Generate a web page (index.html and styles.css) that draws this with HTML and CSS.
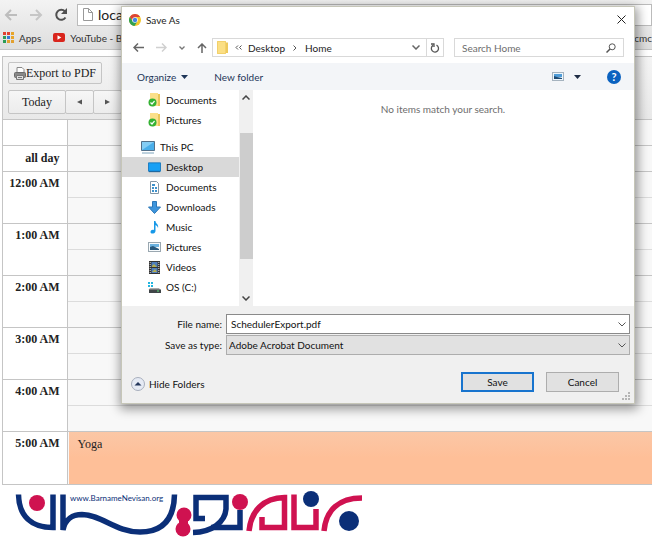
FILE: index.html
```html
<!DOCTYPE html>
<html lang="en">
<head>
<meta charset="utf-8">
<title>Scheduler</title>
<link rel="stylesheet" href="styles.css">
</head>
<body>
<header class="browser">
  <div class="address-row">
    <button class="plain" aria-label="Back"><svg width="14" height="12" viewBox="0 0 14 12" fill="none" stroke="#bdbdbd" stroke-width="2"><path d="M7 1L2 6l5 5M2 6h11"/></svg></button>
    <button class="plain" aria-label="Forward"><svg width="14" height="12" viewBox="0 0 14 12" fill="none" stroke="#c6c6c6" stroke-width="2"><path d="M7 1l5 5-5 5M12 6H1"/></svg></button>
    <button class="plain" aria-label="Reload"><svg width="14" height="14" viewBox="0 0 14 14"><path d="M11.5 9.5A5 5 0 1 1 11 3.500" fill="none" stroke="#505050" stroke-width="2"/><path d="M13 0v6H7z" fill="#505050"/></svg></button>
    <div class="omnibox">
      <svg width="10" height="13" viewBox="0 0 10 13" fill="#fff" stroke="#999"><path d="M.5.5h5l4 4v8h-9zM5.500.5v4h4"/></svg>
      <input class="url" aria-label="Address" value="localhost">
    </div>
  </div>
  <nav class="bookmarks">
    <a href="#apps"><svg width="11" height="11" viewBox="0 0 11 11"><path d="M0 0h3v3H0zM4 0h3v3H4z" fill="#e0402f"/><path d="M8 0h3v3H8zM8 4h3v3H8z" fill="#e8a52a"/><path d="M0 4h3v3H0zM0 8h3v3H0z" fill="#2c9c55"/><path d="M4 4h3v3H4z" fill="#3578d6"/><path d="M4 8h3v3H4zM8 8h3v3H8z" fill="#e2a02f"/></svg>Apps</a>
    <a href="#youtube"><svg width="12" height="9" viewBox="0 0 12 9"><rect width="12" height="9" rx="2" fill="#d9251d"/><path d="M4.500 2.300v4.400L8.300 4.500z" fill="#fff"/></svg>YouTube - B</a>
    <a class="last" href="#cmc">cmc</a>
  </nav>
</header>

<main class="scheduler">
  <div class="tools">
    <button class="tool export"><svg width="12" height="13" viewBox="0 0 12 13"><path d="M3 6V.5h5l2 2V6" fill="#fff" stroke="#888"/><rect x=".5" y="5.500" width="11" height="5" rx="1" fill="#888" stroke="#6a6a6a"/><path d="M2.500 8.500h7v4h-7z" fill="#ddd" stroke="#777"/><path d="M4 10.500h4" stroke="#777"/></svg>Export to PDF</button>
    <div class="dates">
      <button class="tool today">Today</button>
      <button class="tool step" aria-label="Previous day"><svg width="5" height="6" viewBox="0 0 5 6"><path d="M5 .5v5L0 3z" fill="#555"/></svg></button>
      <button class="tool step" aria-label="Next day"><svg width="5" height="6" viewBox="0 0 5 6"><path d="M0 .5v5L5 3z" fill="#555"/></svg></button>
    </div>
  </div>
  <table class="day">
    <tbody>
      <tr class="short"><th></th><td></td></tr>
      <tr class="short"><th scope="row">all day</th><td></td></tr>
      <tr><th scope="row">12:00 AM</th><td><div class="half"></div></td></tr>
      <tr><th scope="row">1:00 AM</th><td><div class="half"></div></td></tr>
      <tr><th scope="row">2:00 AM</th><td><div class="half"></div></td></tr>
      <tr><th scope="row">3:00 AM</th><td><div class="half"></div></td></tr>
      <tr><th scope="row">4:00 AM</th><td><div class="half"></div></td></tr>
      <tr><th scope="row">5:00 AM</th><td><div class="event">Yoga</div></td></tr>
    </tbody>
  </table>
</main>

<footer class="brand">
  <svg width="380" height="47" viewBox="0 489 380 47" fill="none" stroke-width="5.500" role="img" aria-label="Barname Nevisan">
    <g stroke="#0b2f78">
      <path d="M18.500 493.500C19 515 31 526.500 53 526.500V493.500"/>
      <path d="M63 493.500V529C65 518 73 513.500 82 513.500C102 514 116 531 140 531C162 531 174 519 174.500 493.500"/>
      <path d="M205 517.500H196V496.500H226V508C225 521 212 531 193 531.500"/>
      <path d="M211 526.500H240V509"/>
    </g>
    <g stroke="#cf1250">
      <path d="M249 530C251 510 263 497 284.500 496.500V526.500H262V516"/>
      <path d="M294 493.500V526.500H316V508"/>
      <path d="M324 530C326 509 339 497 362 497"/>
    </g>
    <g fill="#cf1250"><circle cx="37" cy="502" r="8"/><circle cx="184" cy="514" r="7.500"/><circle cx="183" cy="528" r="7.500"/><path d="M179 517h9v8h-9z"/><circle cx="240" cy="501" r="8"/></g>
    <g fill="#0b2f78"><circle cx="311" cy="498" r="8"/><circle cx="349" cy="520" r="10"/></g>
    <text class="site" x="70" y="500">www.BarnameNevisan.org</text>
  </svg>
</footer>

<form class="dialog" role="dialog" aria-label="Save As">
  <div class="title">
    <svg width="12" height="12" viewBox="0 0 12 12"><circle cx="6" cy="6" r="6" fill="#f3c52b"/><path d="M.8 3A6 6 0 0 1 11.200 3H6L4 7z" fill="#dc4437"/><path d="M.8 3A6 6 0 0 0 5.500 12L8 8 4 7.500z" fill="#30a052"/><circle cx="6" cy="6" r="2.800" fill="#fff"/><circle cx="6" cy="6" r="2.200" fill="#4285e8"/></svg>
    <span>Save As</span>
    <button type="button" class="plain close" aria-label="Close"><svg width="9" height="9" viewBox="0 0 9 9" stroke="#222" fill="none"><path d="M.5.5l8 8M8.500.5l-8 8"/></svg></button>
  </div>
  <div class="nav">
    <div class="arrows">
      <button type="button" class="plain" aria-label="Back"><svg width="11" height="9" viewBox="0 0 11 9" fill="none" stroke="#666" stroke-width="1.500"><path d="M5 .5l-4 4 4 4M1 4.500h10"/></svg></button>
      <button type="button" class="plain" aria-label="Forward"><svg width="11" height="9" viewBox="0 0 11 9" fill="none" stroke="#d0d0d0" stroke-width="1.500"><path d="M6 .5l4 4-4 4M10 4.500H0"/></svg></button>
      <button type="button" class="plain" aria-label="Recent"><svg width="6" height="4" viewBox="0 0 6 4" fill="none" stroke="#777" stroke-width="1.300"><path d="M.5.5L3 3 5.500.5"/></svg></button>
      <button type="button" class="plain" aria-label="Up"><svg width="10" height="10" viewBox="0 0 10 10" fill="none" stroke="#666" stroke-width="1.500"><path d="M1 5l4-4 4 4M5 1v9"/></svg></button>
    </div>
    <div class="path">
      <svg width="12" height="13" viewBox="0 0 12 13"><path d="M0 0h9v13H0z" fill="#fbdf84"/><path d="M9 1.500h2V12H9z" fill="#edc95c"/><path d="M.5.5h8v12h-8z" fill="none" stroke="#f2d06b"/></svg>
      <svg width="7" height="5" viewBox="0 0 7 5" fill="none" stroke="#555"><path d="M3 .5l-2 2 2 2M6.500.5l-2 2 2 2"/></svg>
      <span>Desktop</span>
      <svg class="crumb" width="4" height="6" viewBox="0 0 4 6" fill="none" stroke="#555"><path d="M.5.5L3 3 .5 5.500"/></svg>
      <span>Home</span>
      <button type="button" class="plain drop" aria-label="Locations"><svg width="8" height="5" viewBox="0 0 8 5" fill="none" stroke="#666" stroke-width="1.500"><path d="M.5.5L4 4 7.500.5"/></svg></button>
      <button type="button" class="plain refresh" aria-label="Refresh"><svg width="10" height="10" viewBox="0 0 10 10" fill="none" stroke="#555" stroke-width="1.300"><path d="M6.500 2.200A3.600 3.600 0 1 1 3 2.400M1 1h3v3"/></svg></button>
    </div>
    <div class="search">
      <input aria-label="Search Home" placeholder="Search Home">
      <svg width="10" height="10" viewBox="0 0 10 10" fill="none" stroke="#555"><circle cx="6.200" cy="3.800" r="3"/><path d="M4 6L.5 9.500" stroke-width="1.500"/></svg>
    </div>
  </div>
  <div class="commands">
    <button type="button" class="plain organize">Organize <svg width="7" height="4" viewBox="0 0 7 4"><path d="M0 0h7L3.500 4z" fill="#1e3558"/></svg></button>
    <button type="button" class="plain">New folder</button>
    <button type="button" class="plain view" aria-label="View"><svg width="12" height="9" viewBox="0 0 12 9"><rect x=".5" y=".5" width="11" height="8" fill="#eef6fc" stroke="#a5b3bf"/><path d="M2 2h8v3H2z" fill="#4f9cd8"/><path d="M2 7V4l3 1 5 1v1z" fill="#1d4a72"/></svg><svg width="7" height="4" viewBox="0 0 7 4"><path d="M0 0h7L3.500 4z" fill="#1e2c44"/></svg></button>
    <button type="button" class="help" aria-label="Help">?</button>
  </div>
  <div class="content">
    <ul class="tree">
      <li><svg width="13" height="14" viewBox="0 0 13 14"><path d="M2 0h8v13H2z" fill="#fbe08a"/><path d="M10 1h2v12h-2z" fill="#e9c65a"/><circle cx="4.500" cy="9.500" r="4" fill="#35b234"/><path d="M2.500 9.500L4 11l2.500-3" fill="none" stroke="#fff" stroke-width="1.200"/></svg>Documents</li>
      <li><svg width="13" height="14" viewBox="0 0 13 14"><path d="M2 0h8v13H2z" fill="#fbe08a"/><path d="M10 1h2v12h-2z" fill="#e9c65a"/><circle cx="4.500" cy="9.500" r="4" fill="#35b234"/><path d="M2.500 9.500L4 11l2.500-3" fill="none" stroke="#fff" stroke-width="1.200"/></svg>Pictures</li>
      <li class="root"><svg width="14" height="13" viewBox="0 0 14 13"><path d="M.5.5h13v9H.5z" fill="#48aeea" stroke="#52708a"/><path d="M1 1h12L1 9z" fill="#83cdf5"/><path d="M1 12h12" stroke="#7fa5bd"/></svg>This PC</li>
      <li class="selected"><svg width="13" height="11" viewBox="0 0 14 11"><path d="M.5.5h13v9H.5z" fill="#18a0f5" stroke="#1878bd"/><path d="M1 10h12" stroke="#125c94"/></svg>Desktop</li>
      <li><svg width="13" height="13" viewBox="0 0 13 13"><path d="M2.500.5h6l2 2v10h-8z" fill="#fff" stroke="#8296a5"/><path d="M4 3h3v2H4zM4 6h2v2H4zM7 6h2v2H7zM4 9h2v2H4zM7 9h2v2H7z" fill="#3d91cc"/></svg>Documents</li>
      <li><svg width="13" height="13" viewBox="0 0 13 13"><path d="M4.500.5h4V6h4l-6 6.500L.5 6h4z" fill="#3e95dc" stroke="#2c78b8"/></svg>Downloads</li>
      <li><svg width="13" height="13" viewBox="0 0 13 13"><path d="M6 0h1.500c0 3 3.500 3 2.500 7-.5-2-1.500-2.500-2.500-3v6c0 3-5 3.500-5 1 0-2 2-2.500 3.500-2z" fill="#1698e8"/></svg>Music</li>
      <li><svg width="13" height="10" viewBox="0 0 13 10"><rect x=".5" y=".5" width="12" height="9" fill="#f7fbfd" stroke="#9aa7b0"/><path d="M2 2h9v3H2z" fill="#6bb2e0"/><path d="M2 8V5l3-1 6 3v1z" fill="#28587c"/></svg>Pictures</li>
      <li><svg width="13" height="13" viewBox="0 0 13 13"><path d="M1 0h11v13H1z" fill="#333"/><path d="M3.500 1h6v5h-6zM3.500 7h6v5h-6z" fill="#507fbd"/><path d="M4 5l2-2 3 3H4zM4 11l3-3 2 3z" fill="#b3ad50"/><path d="M2.200 1v12M10.800 1v12" stroke="#ddd" stroke-dasharray="1 1"/></svg>Videos</li>
      <li><svg width="13" height="12" viewBox="0 0 13 12"><path d="M0 1h2v2H0zM3 1h2v2H3zM0 4h2v2H0zM3 4h2v2H3z" fill="#22b5df"/><path d="M2 7h9l1.500 2h-12z" fill="#aaa"/><path d="M1 8.500h12V12H1z" fill="#404548"/><path d="M9 10h2" stroke="#5ce07d"/></svg>OS (C:)</li>
    </ul>
    <div class="scroll">
      <svg width="8" height="5" viewBox="0 0 8 5" fill="none" stroke="#444" stroke-width="1.500"><path d="M.5 4.500L4 1l3.500 3.500"/></svg>
      <div class="thumb"></div>
      <svg width="8" height="5" viewBox="0 0 8 5" fill="none" stroke="#444" stroke-width="1.500"><path d="M.5.5L4 4 7.500.5"/></svg>
    </div>
    <p class="empty">No items match your search.</p>
  </div>
  <div class="save">
    <div class="fields">
      <label for="file">File name:</label>
      <div class="combo"><input id="file" value="SchedulerExport.pdf"><svg width="8" height="5" viewBox="0 0 8 5" fill="none" stroke="#555"><path d="M.5.5L4 4 7.500.5"/></svg></div>
      <label for="type">Save as type:</label>
      <div class="combo grey"><select id="type"><option>Adobe Acrobat Document</option></select><svg width="8" height="5" viewBox="0 0 8 5" fill="none" stroke="#555"><path d="M.5.5L4 4 7.500.5"/></svg></div>
    </div>
    <div class="actions">
      <button type="button" class="plain hide"><svg width="14" height="14" viewBox="0 0 14 14"><circle cx="7" cy="7" r="6.500" fill="#e5eaf4" stroke="#a7aebc"/><path d="M3.500 8.500L7 5l3.500 3.500z" fill="#24375c"/></svg>Hide Folders</button>
      <button type="button" class="push primary">Save</button>
      <button type="button" class="push">Cancel</button>
    </div>
    <svg class="grip" width="8" height="8" viewBox="0 0 8 8" fill="#b5b5b5"><path d="M6 0h2v2H6zM3 3h2v2H3zM6 3h2v2H6zM0 6h2v2H0zM3 6h2v2H3zM6 6h2v2H6z"/></svg>
  </div>
</form>
</body>
</html>
```

FILE: styles.css
```css
* {
  box-sizing: border-box;
}

body {
  margin: 0;
  position: relative;
  background: #fff;
  color: #222;
  font: 10px/16px Lato, "Open Sans", sans-serif;
}

button,
input,
select {
  font: inherit;
  color: inherit;
  margin: 0;
  padding: 0;
}

.plain {
  display: flex;
  align-items: center;
  border: 0;
  background: none;
}

svg {
  flex: none;
}

/* Browser chrome */
.browser {
  height: 50px;
  padding-top: 3px;
  background: linear-gradient(#f3f3f3, #dedede);
  border-bottom: 1px solid #c4c4c4;
}

.address-row {
  display: flex;
  align-items: center;
  height: 23px;
  padding-left: 4px;
  gap: 11px;
}

.omnibox {
  flex: 1;
  display: flex;
  align-items: center;
  gap: 5px;
  height: 22px;
  margin-left: -2px;
  padding-left: 5px;
  background: #fff;
  border: 1px solid #bbb;
}

.url {
  flex: 1;
  border: 0;
  font-size: 14px;
  line-height: 18px;
}

.bookmarks {
  display: flex;
  align-items: center;
  height: 23px;
  padding-left: 3px;
  gap: 12px;
}

.bookmarks a {
  display: flex;
  align-items: center;
  gap: 5px;
  color: #333;
  text-decoration: none;
  white-space: nowrap;
}

.bookmarks .last {
  margin-left: auto;
}

/* Scheduler */
.scheduler {
  margin: 6px 0 0 2px;
  border: 1px solid #c5c5c5;
  border-width: 1px 0 1px 1px;
  font: 12px/16px "Liberation Serif", serif;
}

.tools {
  display: flex;
  flex-direction: column;
  align-items: flex-start;
  gap: 6px;
  padding: 5px;
  height: 62px;
  background: linear-gradient(#f4f4f4, #e9e9e9);
}

.tool {
  display: flex;
  align-items: center;
  justify-content: center;
  height: 24px;
  padding: 0 5px;
  border: 1px solid #c5c5c5;
  border-radius: 2px;
  background: linear-gradient(#f6f6f6, #ececec);
}

.dates {
  display: flex;
}

.today {
  width: 58px;
}

.step {
  width: 29px;
  margin-left: -1px;
}

.day {
  width: 100%;
  table-layout: fixed;
  border-collapse: collapse;
}

.day tr {
  height: 52px;
}

.day .short {
  height: 26px;
}

.day th,
.day td {
  padding: 0;
  border-top: 1px solid #c5c5c5;
  vertical-align: top;
}

.day th {
  width: 64px;
  padding: 3px 7px 0 0;
  border-right: 1px solid #c5c5c5;
  text-align: right;
}

.day .short th {
  padding-top: 4px;
}

.day td {
  background: #f8f8f8;
}

.half {
  height: 26px;
  border-bottom: 1px solid #dcdcdc;
}

.event {
  height: 52px;
  margin-left: 1px;
  padding: 4px 9px;
  background: linear-gradient(#fbc7a6, #febf98 50%);
}

.brand {
  padding: 5px 0 0;
}

.brand svg {
  display: block;
}

.site {
  font: 8px Lato, "Open Sans", sans-serif;
  fill: #0b2f78;
  stroke: none;
}

/* Save dialog */
.dialog {
  position: absolute;
  top: 6px;
  left: 121px;
  right: 17px;
  border: 1px solid #c6c6b8;
  background: #fff;
  box-shadow: 1px 3px 10px 2px rgba(0, 0, 0, 0.4);
}

.title {
  display: flex;
  align-items: center;
  gap: 5px;
  height: 25px;
  padding: 0 8px 0 7px;
}

.close {
  margin-left: auto;
}

.nav {
  display: flex;
  gap: 10px;
  height: 31px;
  padding: 6px 10px 6px 11px;
}

.arrows {
  display: flex;
  align-items: center;
  gap: 12px;
}

.path {
  flex: 1;
  display: flex;
  align-items: center;
  gap: 6px;
  padding-left: 4px;
  margin-left: -5px;
  border: 1px solid #d9d9d9;
}

.crumb {
  margin: 0 2px;
}

.drop {
  margin-left: auto;
}

.refresh {
  align-self: stretch;
  padding: 0 3px;
  border-left: 1px solid #d9d9d9;
}

.search {
  width: 170px;
  display: flex;
  align-items: center;
  padding: 0 7px;
  border: 1px solid #d9d9d9;
}

.search input {
  flex: 1;
  min-width: 0;
  border: 0;
}

.search input::placeholder {
  color: #6d6d6d;
}

.commands {
  display: flex;
  align-items: center;
  gap: 26px;
  height: 27px;
  padding: 0 13px 0 15px;
  background: #f3f5f8;
  color: #1e3558;
}

.organize {
  gap: 5px;
}

.view {
  gap: 10px;
  margin-left: auto;
}

.help {
  width: 14px;
  height: 14px;
  border: 0;
  border-radius: 50%;
  background: #0b62c0;
  color: #fff;
  font-size: 11px;
  font-weight: bold;
  line-height: 14px;
}

.content {
  display: flex;
  height: 216px;
}

.tree {
  width: 117px;
  margin: 0;
  padding: 0;
  list-style: none;
  color: #111;
}

.tree li {
  display: flex;
  align-items: center;
  gap: 5px;
  height: 20px;
  padding-left: 26px;
}

.tree .root {
  margin-top: 7px;
  padding-left: 19px;
}

.tree .selected {
  background: #d9d9d9;
}

.scroll {
  width: 14px;
  display: flex;
  flex-direction: column;
  align-items: center;
  padding: 5px 0;
  background: #f0f0f0;
}

.thumb {
  width: 13px;
  height: 126px;
  margin: 33px 0 auto;
  background: #cdcdcd;
}

.empty {
  flex: 1;
  margin: 11px 0 0;
  padding-right: 1px;
  text-align: center;
  color: #6d6d6d;
}

.save {
  height: 97px;
  padding: 8px 4px 0 9px;
  background: #f0f0f0;
  color: #111;
}

.fields {
  display: grid;
  grid-template-columns: 91px 1fr;
  gap: 1px 4px;
  align-items: center;
}

.fields label {
  text-align: right;
}

.combo {
  display: flex;
  align-items: center;
  height: 20px;
  padding: 0 3px 0 4px;
  border: 1px solid #8a8a8a;
  background: #fff;
}

.combo input,
.combo select {
  flex: 1;
  border: 0;
  background: none;
  appearance: none;
}

.combo.grey {
  padding-left: 2px;
  border-color: #adadad;
  background: #e1e1e1;
}

.actions {
  display: flex;
  align-items: center;
  gap: 12px;
  padding: 17px 11px 0 0;
}

.hide {
  gap: 4px;
  margin: 4px auto 0 0;
}

.push {
  width: 73px;
  height: 20px;
  border: 1px solid #adadad;
  background: #e1e1e1;
}

.primary {
  border: 2px solid #1874ce;
}

.grip {
  display: block;
  margin-left: auto;
}
```
